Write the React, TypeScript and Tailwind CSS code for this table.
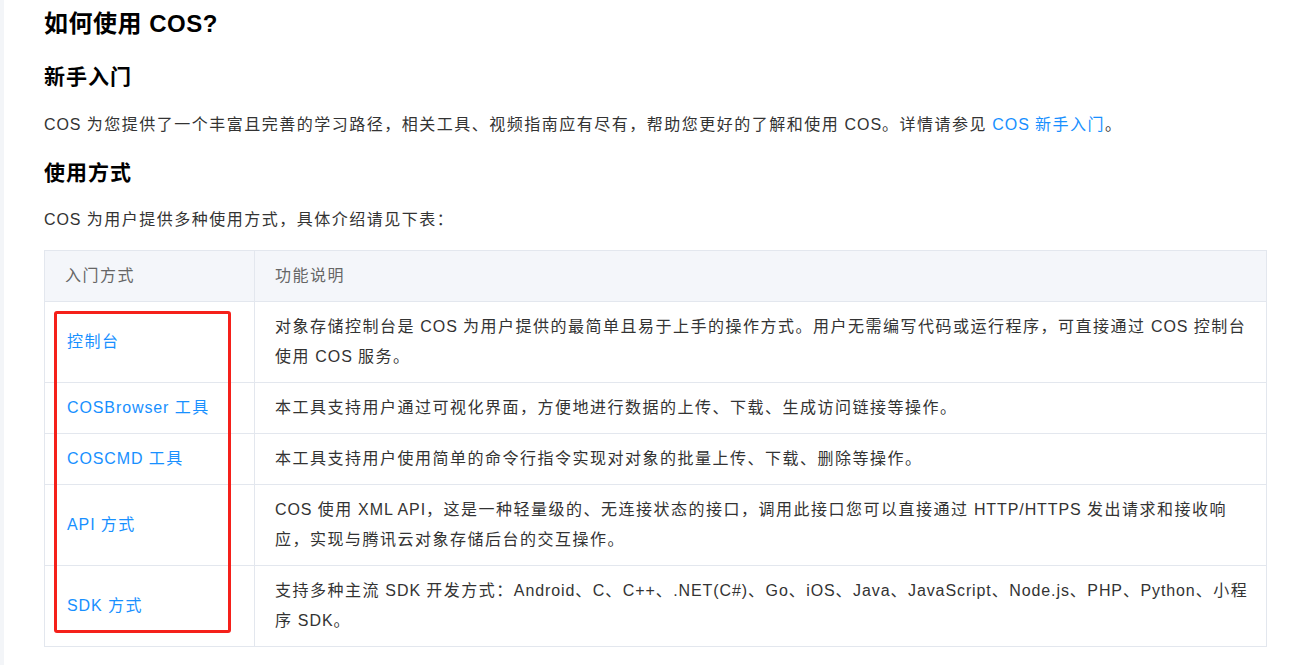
const rows = [
  {
    name: "控制台",
    lines: [
      "对象存储控制台是 COS 为用户提供的最简单且易于上手的操作方式。用户无需编写代码或运行程序，可直接通过 COS 控制台",
      "使用 COS 服务。",
    ],
  },
  {
    name: "COSBrowser 工具",
    lines: ["本工具支持用户通过可视化界面，方便地进行数据的上传、下载、生成访问链接等操作。"],
  },
  {
    name: "COSCMD 工具",
    lines: ["本工具支持用户使用简单的命令行指令实现对对象的批量上传、下载、删除等操作。"],
  },
  {
    name: "API 方式",
    lines: [
      "COS 使用 XML API，这是一种轻量级的、无连接状态的接口，调用此接口您可以直接通过 HTTP/HTTPS 发出请求和接收响",
      "应，实现与腾讯云对象存储后台的交互操作。",
    ],
  },
  {
    name: "SDK 方式",
    lines: [
      "支持多种主流 SDK 开发方式：Android、C、C++、.NET(C#)、Go、iOS、Java、JavaScript、Node.js、PHP、Python、小程",
      "序 SDK。",
    ],
  },
];

// latin runs get tighter spacing than the CJK glyphs around them
const Mixed = ({ text }: { text: string }) => (
  <>
    {text.split(/([\x20-\x7e]+)/).map((part, i) =>
      /^[\x20-\x7e]+$/.test(part) ? (
        <span key={i} className="tracking-[0.9px]">
          {part}
        </span>
      ) : (
        part
      )
    )}
  </>
);

const App = () => {
  return (
    <div className="flex min-h-[665px] bg-white font-['Liberation_Sans','Noto_Sans_CJK_SC',sans-serif]">
      <div className="w-[4px] shrink-0 bg-[#f3f5f8]" />
      <div className="pl-[40px] pt-2">
        <h1 className="text-[24px] leading-[32px] font-bold tracking-[0.5px] text-black">
          如何使用 COS?
        </h1>
        <h2 className="mt-[21px] text-[21px] leading-[32px] font-bold tracking-[1px] text-black">
          新手入门
        </h2>
        <p className="mt-[17px] text-[16px] leading-[30px] tracking-[1.5px] text-[#333]">
          <Mixed text="COS 为您提供了一个丰富且完善的学习路径，相关工具、视频指南应有尽有，帮助您更好的了解和使用 COS。详情请参见 " />
          <a className="text-[#1890ff]">
            <Mixed text="COS 新手入门" />
          </a>
          。
        </p>
        <h2 className="mt-[17px] text-[21px] leading-[32px] font-bold tracking-[1px] text-black">
          使用方式
        </h2>
        <p className="mt-[16px] text-[16px] leading-[30px] tracking-[1.5px] text-[#333]">
          <Mixed text="COS 为用户提供多种使用方式，具体介绍请见下表：" />
        </p>

        <div className="relative mt-[15px]">
          <table className="w-[1223px] table-fixed border-collapse text-[16px] leading-[30px] tracking-[1.5px]">
            <colgroup>
              <col className="w-[210px]" />
              <col />
            </colgroup>
            <thead>
              <tr className="bg-[#f4f6fa]">
                <th className="border border-[#e3e7ee] px-5 py-[10px] text-left font-normal text-[#666]">
                  入门方式
                </th>
                <th className="border border-[#e3e7ee] px-5 py-[10px] text-left font-normal text-[#666]">
                  功能说明
                </th>
              </tr>
            </thead>
            <tbody>
              {rows.map((row) => (
                <tr key={row.name}>
                  <td className="border border-[#e3e7ee] px-5 py-[10px] align-middle">
                    <a className="whitespace-nowrap pl-[2px] text-[#1890ff]">
                      <Mixed text={row.name} />
                    </a>
                  </td>
                  <td className="border border-[#e3e7ee] px-5 py-[10px] text-[#333]">
                    {row.lines.map((line) => (
                      <div key={line} className="whitespace-nowrap">
                        <Mixed text={line} />
                      </div>
                    ))}
                  </td>
                </tr>
              ))}
            </tbody>
          </table>
          {/* red highlight box over the first column */}
          <div className="pointer-events-none absolute left-[10px] top-[61px] h-[322px] w-[177px] rounded-[3px] border-[3px] border-[#f5201a]" />
        </div>
      </div>
    </div>
  );
};

export default App;
